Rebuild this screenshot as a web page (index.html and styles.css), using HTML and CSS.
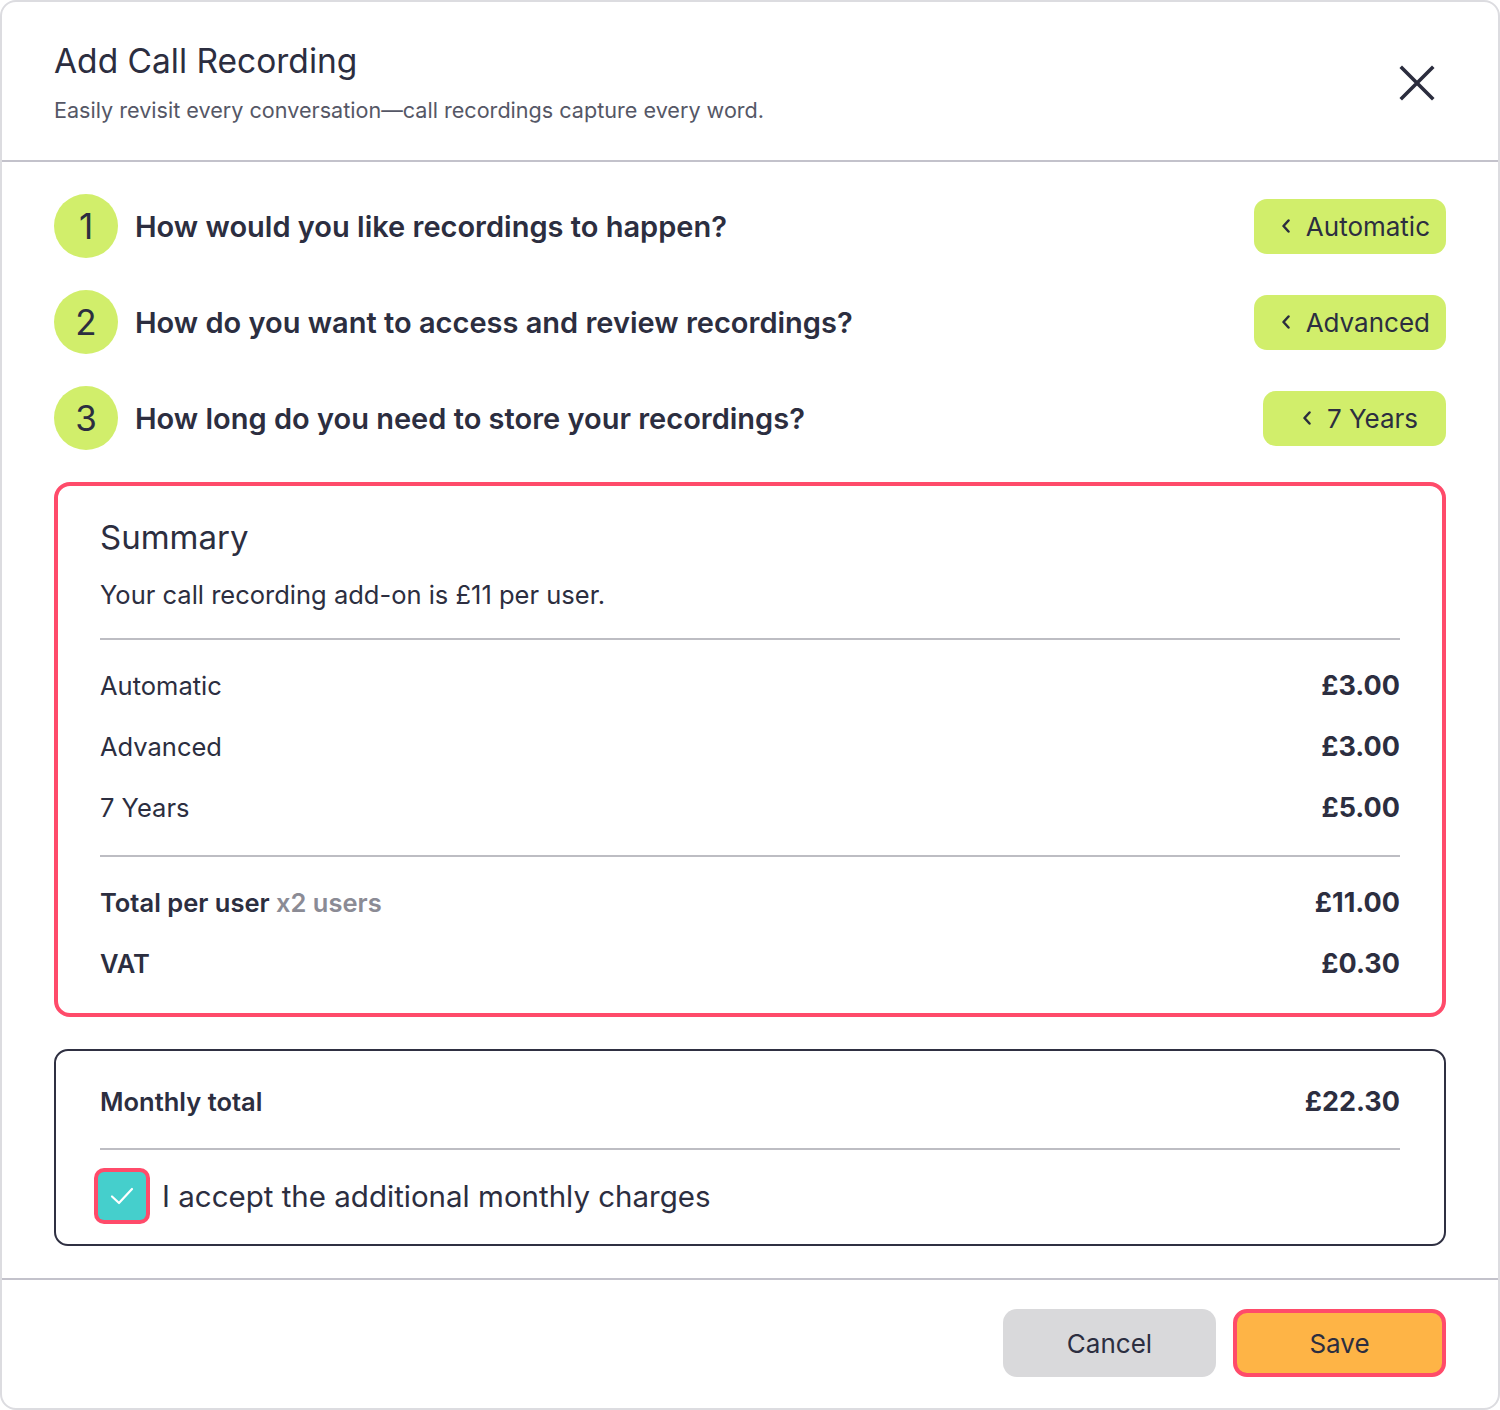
FILE: index.html
```html
<!DOCTYPE html>
<html lang="en">
<head>
<meta charset="utf-8">
<title>Add Call Recording</title>
<link rel="stylesheet" href="styles.css">
</head>
<body>
<div class="modal">
  <header class="modal-header">
    <div class="heading">
      <h1 class="title">Add Call Recording</h1>
      <p class="subtitle">Easily revisit every conversation—call recordings capture every word.</p>
    </div>
    <button class="close" aria-label="Close">
      <svg width="36" height="36" viewBox="0 0 36 36"><path d="M3 3 L33 33 M33 3 L3 33" stroke="#2b2d3e" stroke-width="3.6" stroke-linecap="square" fill="none"/></svg>
    </button>
  </header>

  <main class="modal-body">
    <ol class="steps">
      <li class="step">
        <span class="num">1</span>
        <span class="question">How would you like recordings to happen?</span>
        <button class="pill"><svg class="chev" width="10" height="14" viewBox="0 0 10 14"><path d="M7.5 1.5 L2.5 7 L7.5 12.5" stroke="#2b2d3e" stroke-width="2.5" fill="none" stroke-linecap="round" stroke-linejoin="round"/></svg>Automatic</button>
      </li>
      <li class="step">
        <span class="num">2</span>
        <span class="question">How do you want to access and review recordings?</span>
        <button class="pill"><svg class="chev" width="10" height="14" viewBox="0 0 10 14"><path d="M7.5 1.5 L2.5 7 L7.5 12.5" stroke="#2b2d3e" stroke-width="2.5" fill="none" stroke-linecap="round" stroke-linejoin="round"/></svg>Advanced</button>
      </li>
      <li class="step">
        <span class="num">3</span>
        <span class="question">How long do you need to store your recordings?</span>
        <button class="pill"><svg class="chev" width="10" height="14" viewBox="0 0 10 14"><path d="M7.5 1.5 L2.5 7 L7.5 12.5" stroke="#2b2d3e" stroke-width="2.5" fill="none" stroke-linecap="round" stroke-linejoin="round"/></svg>7 Years</button>
      </li>
    </ol>

    <section class="summary">
      <h2 class="summary-title">Summary</h2>
      <p class="summary-desc">Your call recording add-on is £11 per user.</p>
      <div class="lines">
        <div class="line"><span>Automatic</span><b>£3.00</b></div>
        <div class="line"><span>Advanced</span><b>£3.00</b></div>
        <div class="line"><span>7 Years</span><b>£5.00</b></div>
      </div>
      <div class="lines totals">
        <div class="line"><span class="strong">Total per user <em class="muted">x2 users</em></span><b>£11.00</b></div>
        <div class="line"><span class="strong">VAT</span><b>£0.30</b></div>
      </div>
    </section>

    <section class="monthly">
      <div class="line monthly-line"><span class="strong">Monthly total</span><b>£22.30</b></div>
      <label class="accept">
        <span class="checkbox"><svg width="28" height="28" viewBox="0 0 28 28"><path d="M4 14.5 L11 21 L24 7" stroke="#ffffff" stroke-width="2.2" fill="none" stroke-linecap="round" stroke-linejoin="round"/></svg></span>
        <span class="accept-text">I accept the additional monthly charges</span>
      </label>
    </section>
  </main>

  <footer class="modal-footer">
    <button class="btn btn-cancel">Cancel</button>
    <button class="btn btn-save">Save</button>
  </footer>
</div>
</body>
</html>
```

FILE: styles.css
```css
* { box-sizing: border-box; }
html, body { margin: 0; padding: 0; background: #ffffff; }
body {
  font-family: "Inter", "Liberation Sans", sans-serif;
  color: #2c2e40;
  width: 1500px;
  height: 1410px;
}
.modal {
  width: 1500px;
  height: 1410px;
  border: 2px solid #dcdce0;
  border-radius: 16px;
  display: flex;
  flex-direction: column;
  overflow: hidden;
}
.modal-header {
  display: flex;
  justify-content: space-between;
  align-items: center;
  padding: 39px 63px 36px 52px;
  border-bottom: 2px solid #c3c2cb;
}
.title {
  margin: 0;
  font-size: 33.5px;
  line-height: 40px;
  font-weight: 400;
}
.subtitle {
  margin: 15px 0 0;
  font-size: 21.6px;
  line-height: 28px;
  color: #555766;
}
.close {
  border: 0;
  background: none;
  padding: 0;
  width: 36px;
  height: 36px;
  display: flex;
}
.modal-body {
  padding: 32px 52px 32px 52px;
  display: flex;
  flex-direction: column;
  gap: 32px;
  border-bottom: 2px solid #c3c2cb;
}
.steps {
  list-style: none;
  margin: 0;
  padding: 0;
  display: flex;
  flex-direction: column;
  gap: 32px;
}
.step {
  display: flex;
  align-items: center;
  height: 64px;
}
.num {
  width: 64px;
  height: 64px;
  border-radius: 50%;
  background: #d1ee6b;
  display: flex;
  align-items: center;
  justify-content: center;
  font-size: 35px;
  font-weight: 400;
  flex: none;
}
.question {
  margin-left: 17px;
  font-size: 29px;
  font-weight: 600;
  flex: 1;
}
.pill {
  font-family: inherit;
  color: #2c2e40;
  border: 0;
  background: #d1ee6b;
  border-radius: 13px;
  height: 55px;
  min-width: 183px;
  padding: 0 16px 0 27px;
  display: flex;
  align-items: center;
  justify-content: center;
  gap: 15px;
  font-size: 26px;
}
.chev { flex: none; }
.summary {
  border: 4px solid #ff4b6a;
  border-radius: 16px;
  padding: 31px 42px 33px 42px;
}
.summary-title {
  margin: 0;
  font-size: 33px;
  line-height: 40px;
  font-weight: 400;
}
.summary-desc {
  margin: 22px 0 0;
  font-size: 25.5px;
  line-height: 32px;
  padding-bottom: 27px;
  border-bottom: 2px solid #bdbdc3;
}
.lines {
  display: flex;
  flex-direction: column;
  gap: 29px;
  padding: 30px 0 31px;
}
.lines.totals {
  border-top: 2px solid #bdbdc3;
  padding: 30px 0 0;
}
.line {
  display: flex;
  justify-content: space-between;
  align-items: center;
  font-size: 25.5px;
  line-height: 32px;
}
.line b { font-weight: 700; font-size: 27px; }
.strong { font-weight: 600; }
.muted { font-style: normal; color: #8b8b95; }
.monthly {
  border: 2px solid #2f3042;
  border-radius: 14px;
  padding: 35px 44px 24px 44px;
}
.monthly-line {
  padding-bottom: 30px;
  border-bottom: 2px solid #bdbdc3;
}
.accept {
  display: flex;
  align-items: center;
  margin-top: 22px;
  gap: 16px;
}
.checkbox {
  width: 48px;
  height: 48px;
  margin-left: -2px;
  border-radius: 6px;
  background: #45cfcc;
  box-shadow: 0 0 0 4px #ff4b6a;
  display: flex;
  align-items: center;
  justify-content: center;
  flex: none;
}
.accept-text {
  font-size: 29.5px;
  line-height: 36px;
}
.modal-footer {
  display: flex;
  justify-content: flex-end;
  gap: 17px;
  padding: 29px 52px 0;
}
.btn {
  font-family: inherit;
  width: 213px;
  height: 68px;
  border-radius: 14px;
  font-size: 26px;
  color: #2c2e40;
  border: 0;
}
.btn-cancel { background: #d9d9db; }
.btn-save { background: #feb446; border: 4px solid #ff4b6a; }
```
